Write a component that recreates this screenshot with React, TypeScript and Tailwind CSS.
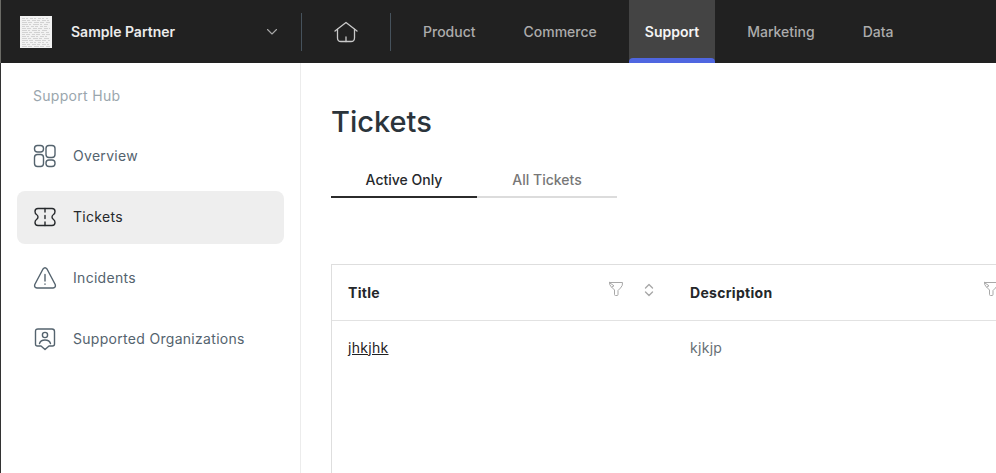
import React from "react";

const Filter = () => (
  <svg width="16" height="16" viewBox="0 0 16 16" fill="none" stroke="#a8a8a8" strokeWidth="1" strokeLinejoin="round" strokeLinecap="round">
    <path d="M1.5 1.500h13q.5 3-2 5.500L10 9.500v4q0 1-1 1H7.500q-1 0-1-1V9L3 5.500Q1 3.500 1.500 1.500z" />
    <path d="M2 2 6 4.800 3.800 6" />
  </svg>
);

const Sort = () => (
  <svg width="12" height="14" viewBox="0 0 12 14" fill="none" stroke="#a8a8a8" strokeWidth="1.4" strokeLinecap="round" strokeLinejoin="round">
    <path d="M2.500 5 6 1.500 9.500 5" />
    <path d="M2.500 9 6 12.500 9.500 9" />
  </svg>
);

const iconProps = {
  width: 24,
  height: 24,
  viewBox: "0 0 24 24",
  fill: "none",
  stroke: "currentColor",
  strokeWidth: 1.4,
  strokeLinecap: "round" as const,
  strokeLinejoin: "round" as const,
};

const OverviewIcon = () => (
  <svg {...iconProps}>
    <rect x="1.500" y="1.500" width="9" height="6.500" rx="3" />
    <rect x="1.500" y="10.500" width="9" height="12" rx="3" />
    <rect x="13" y="1.500" width="9" height="12" rx="3" />
    <rect x="13" y="16" width="9" height="6.500" rx="3" />
  </svg>
);

const TicketIcon = () => (
  <svg {...iconProps}>
    <path d="M5 3.500h14q3 0 3 3 0 2-1.500 3T19 12t1.500 2.500q1.500 1 1.500 3 0 3-3 3H5q-3 0-3-3 0-2 1.500-3T5 12 3.500 9.500Q2 8.500 2 6.500q0-3 3-3z" />
    <path d="M12 3.500v3.500M12 10.500v3M12 17v3.500" />
  </svg>
);

const AlertIcon = () => (
  <svg {...iconProps}>
    <path d="M10 3 1.800 18.500Q.8 21.500 4 22h16q3.200-.5 2.200-3.500L14 3q-2-2.500-4 0z" />
    <path d="M12 8.500v6.500M12 18v.3" />
  </svg>
);

const OrgIcon = () => (
  <svg {...iconProps}>
    <path d="M5 2h14q2.500 0 2.500 2.500V17q0 2-2 2h-3.500L12 22.500 8 19H4.500q-2 0-2-2V4.500Q2.500 2 5 2z" />
    <circle cx="12" cy="8" r="2.600" />
    <path d="M6.500 16.500q1-3.500 5.500-3.500t5.500 3.500" />
  </svg>
);

const logoRows = Array.from({ length: 15 }, (_, i) => i);

const Logo = () => (
  <svg width="32" height="32" viewBox="0 0 32 32" className="shrink-0">
    <rect width="32" height="32" fill="#f2f2f2" />
    {logoRows.map((i) => (
      <path
        key={i}
        d={`M2 ${i * 2 + 2}.5h${26 + (i % 3)}`}
        stroke="#d2d2d2"
        strokeWidth="1"
        strokeDasharray={`${3 + (i % 4)} 1 ${2 + (i % 3)} 2`}
      />
    ))}
  </svg>
);

const navItems = ["Product", "Commerce", "Support", "Marketing", "Data"];

const sideItems = [
  { label: "Overview", icon: <OverviewIcon /> },
  { label: "Tickets", icon: <TicketIcon />, active: true },
  { label: "Incidents", icon: <AlertIcon /> },
  { label: "Supported Organizations", icon: <OrgIcon /> },
];

export default function App() {
  return (
    <div className="w-[996px] h-[473px] overflow-hidden bg-white flex flex-col font-['Inter',sans-serif]">
      <header className="h-[63px] shrink-0 bg-[#212121] border-l border-[#6b6b66] flex items-center text-[14px]">
        <div className="w-[301px] h-[38px] shrink-0 flex items-center pl-[19px] pr-[23px] border-r border-[#46525c]">
          <Logo />
          <span className="ml-[19px] font-semibold text-[#ececec]">Sample Partner</span>
          <svg className="ml-auto" width="12" height="8" viewBox="0 0 12 8" fill="none" stroke="#a8a8a8" strokeWidth="1.1" strokeLinecap="round" strokeLinejoin="round">
            <path d="M1.500 1.500 6 6l4.500-4.500" />
          </svg>
        </div>
        <div className="w-[89px] h-[38px] shrink-0 flex items-center justify-center border-r border-[#46525c]">
          <svg width="24" height="22" viewBox="0 0 24 22" fill="none" stroke="#c9c9c9" strokeWidth="1.300" strokeLinecap="round" strokeLinejoin="round">
            <path d="M1 10 12 1.500 23 10" />
            <path d="M3.500 8.500V17q0 3.500 3.500 3.500h10q3.500 0 3.500-3.500V8.500" />
            <path d="M12 16v4.500" />
          </svg>
        </div>
        <nav className="flex h-full ml-[16px] gap-[16px]">
          {navItems.map((n) =>
            n === "Support" ? (
              <div key={n} className="relative h-full px-4 flex items-center bg-[#444444] font-semibold text-[#f5f5f5]">
                {n}
                <span className="absolute left-0 right-0 bottom-0 h-[5px] rounded-t-[4px] bg-[#4f66e0]" />
              </div>
            ) : (
              <div key={n} className="h-full px-4 flex items-center font-medium text-[#acacac]">
                {n}
              </div>
            )
          )}
        </nav>
      </header>
      <div className="flex flex-1 min-h-0 border-l border-[#333333]">
        <aside className="w-[300px] shrink-0 border-r border-[#ececec] text-[14px] tracking-[0.3px]">
          <div className="pl-[32px] pt-[24px] h-[61px] leading-[17px] text-[#9aa6ad]">Support Hub</div>
          <ul className="flex flex-col gap-[8px] pl-[16px] pr-[16px] mt-[6px]">
            {sideItems.map((s) => (
              <li
                key={s.label}
                className={`h-[53px] flex items-center gap-[16px] pl-[16px] pb-[2px] rounded-[8px] ${
                  s.active ? "bg-[#eeeeee] text-[#26292c]" : "text-[#54636e]"
                }`}
              >
                {s.icon}
                {s.label}
              </li>
            ))}
          </ul>
        </aside>
        <main className="flex-1 min-w-0 pl-[30px] overflow-hidden">
          <h1 className="mt-[40px] text-[29px] leading-[38px] font-medium text-[#2b343b]">Tickets</h1>
          <div className="flex mt-[21px] text-[14px]">
            <div className="w-[146px] h-[36px] flex items-center justify-center font-medium text-[#26292c] border-b-2 border-[#2b2b2b]">
              Active Only
            </div>
            <div className="w-[140px] h-[36px] flex items-center justify-center font-medium text-[#777777] border-b-2 border-[#dcdcdc]">
              All Tickets
            </div>
          </div>
          <div className="mt-[66px] w-[800px] h-[300px] border border-[#dedede] text-[14px] tracking-[0.3px]">
            <div className="h-[56px] flex items-center pb-[1px] border-b border-[#e2e2e2] font-bold text-[#24272a]">
              <div className="w-[342px] shrink-0 flex items-center pl-[16px]">
                <span>Title</span>
                <span className="ml-auto flex items-center gap-[19px] pr-[19px] -mt-[4px]">
                  <span className="-mt-[2px] flex">
                    <Filter />
                  </span>
                  <Sort />
                </span>
              </div>
              <div className="flex-1 flex items-center pl-[16px]">
                <span>Description</span>
                <span className="ml-[211px] -mt-[6px] flex">
                  <Filter />
                </span>
              </div>
            </div>
            <div className="h-[52px] flex items-center">
              <div className="w-[342px] shrink-0 pl-[16px] underline text-[#1f2123]">jhkjhk</div>
              <div className="pl-[16px] text-[#666f75]">kjkjp</div>
            </div>
          </div>
        </main>
      </div>
    </div>
  );
}
